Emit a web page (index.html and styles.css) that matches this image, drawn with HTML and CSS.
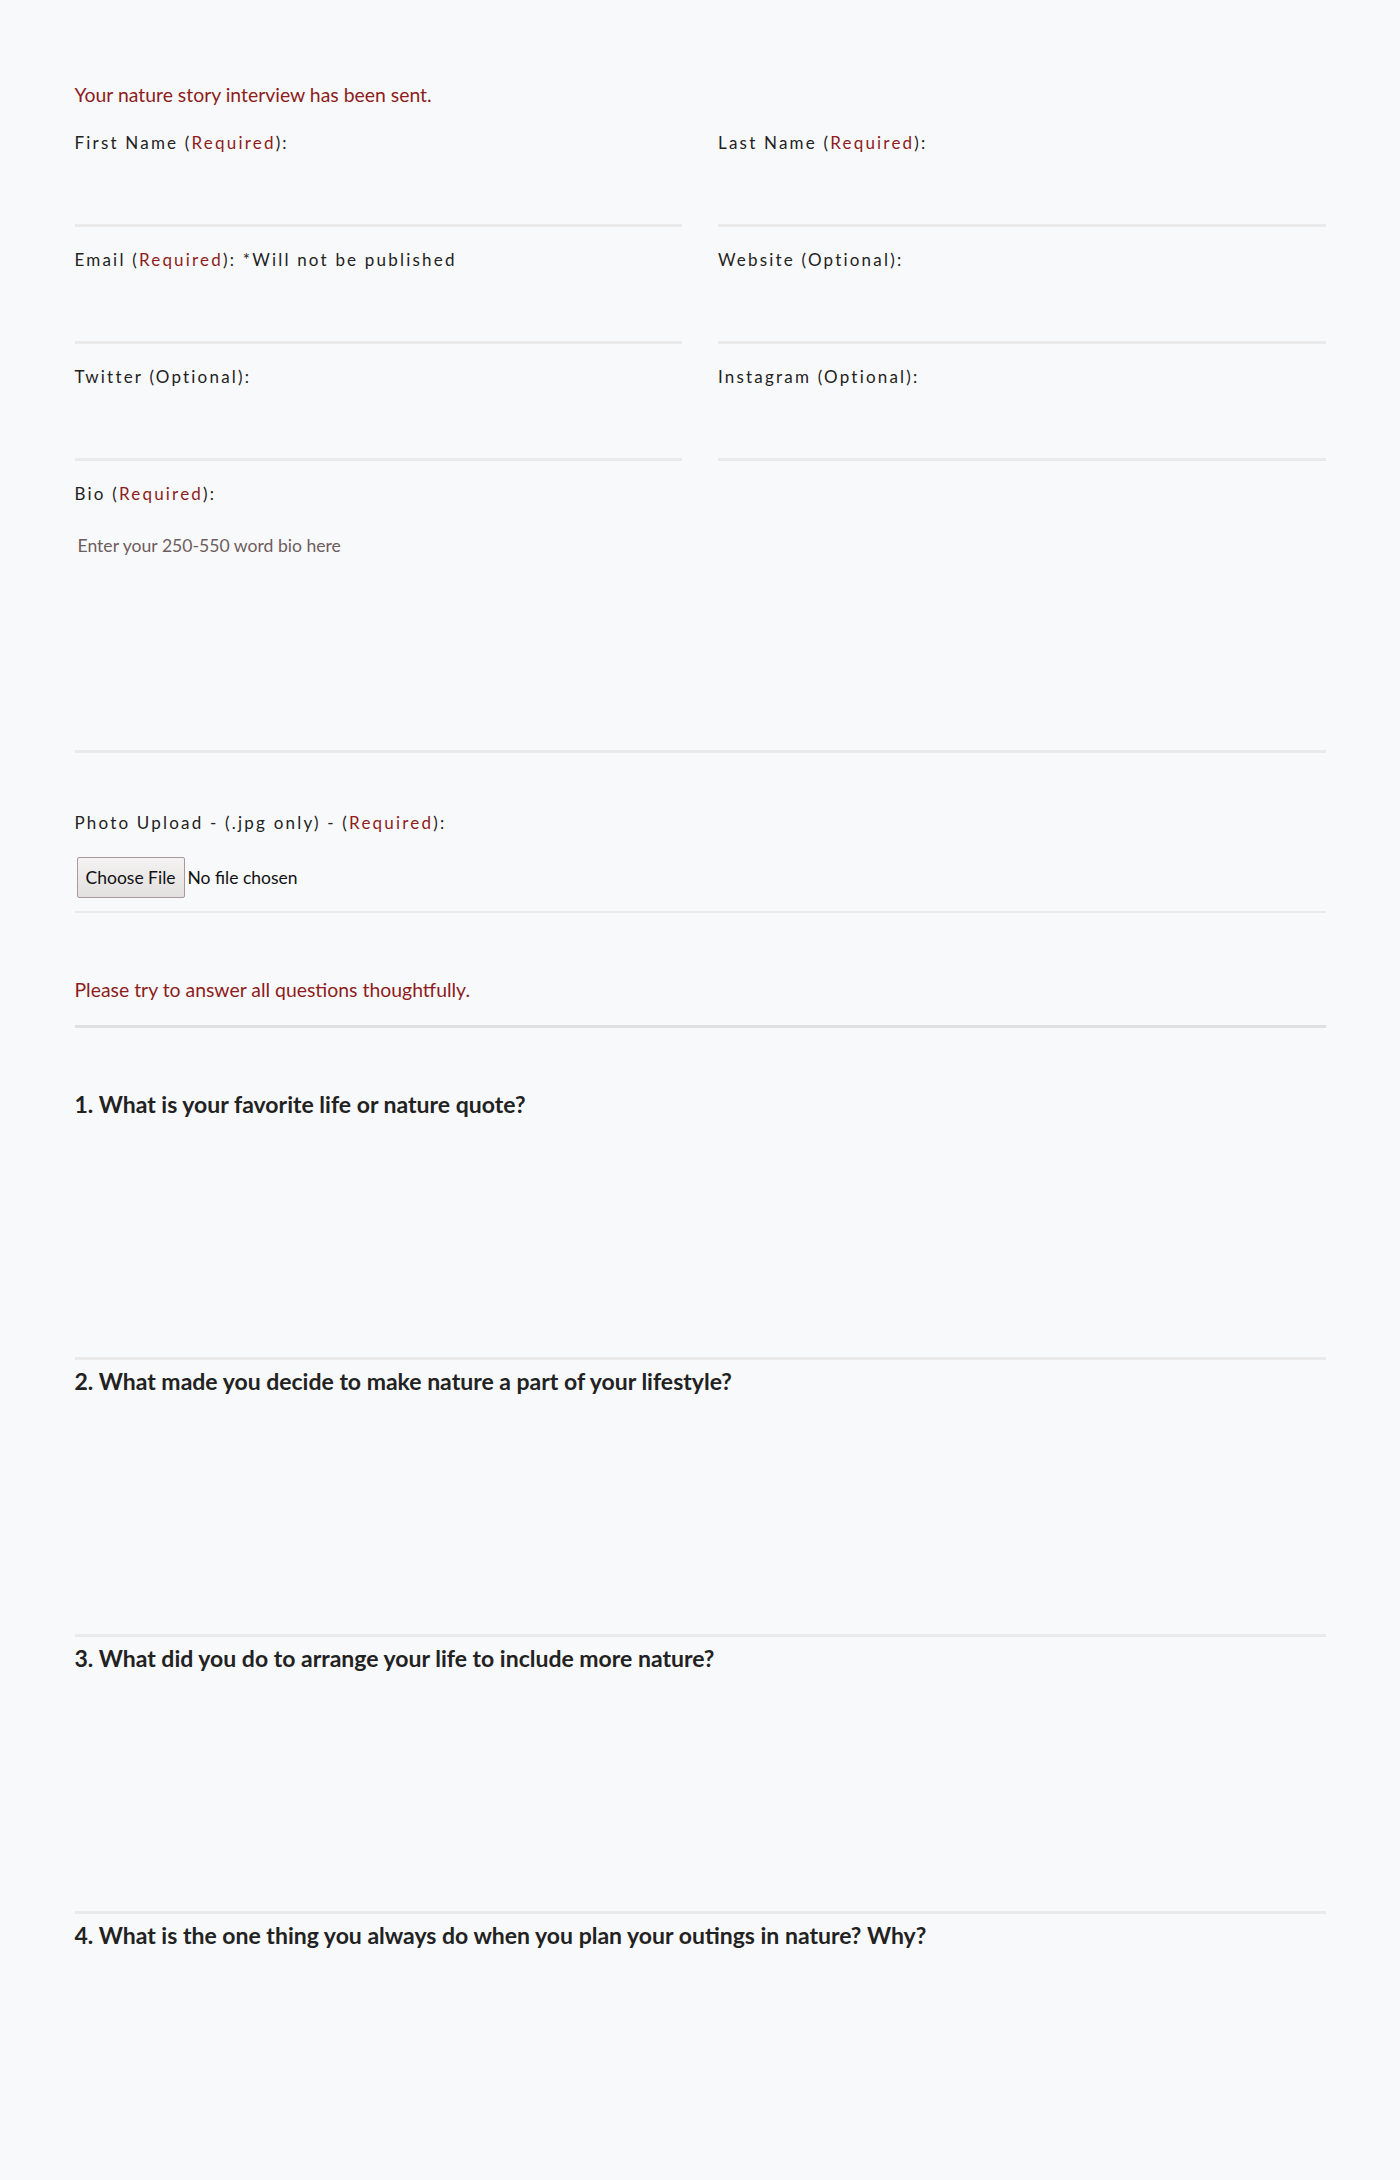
FILE: index.html
```html
<!DOCTYPE html>
<html lang="en">
<head>
<meta charset="utf-8">
<title>Nature Story Interview</title>
<link rel="stylesheet" href="styles.css">
</head>
<body>
<main class="page">
  <p class="notice notice-sent">Your nature story interview has been sent.</p>
  <form class="story-form">
    <div class="grid">
      <div class="field">
        <label class="label" for="fn">First Name (<span class="req">Required</span>):</label>
        <input class="text-input" id="fn" type="text">
      </div>
      <div class="field">
        <label class="label" for="ln">Last Name (<span class="req">Required</span>):</label>
        <input class="text-input" id="ln" type="text">
      </div>
      <div class="field">
        <label class="label" for="em">Email (<span class="req">Required</span>): *Will not be published</label>
        <input class="text-input" id="em" type="email">
      </div>
      <div class="field">
        <label class="label" for="ws">Website (Optional):</label>
        <input class="text-input" id="ws" type="text">
      </div>
      <div class="field">
        <label class="label" for="tw">Twitter (Optional):</label>
        <input class="text-input" id="tw" type="text">
      </div>
      <div class="field">
        <label class="label" for="ig">Instagram (Optional):</label>
        <input class="text-input" id="ig" type="text">
      </div>
    </div>
    <div class="field">
      <label class="label" for="bio">Bio (<span class="req">Required</span>):</label>
      <textarea class="bio" id="bio" placeholder="Enter your 250-550 word bio here"></textarea>
    </div>
    <div class="field photo">
      <label class="label" for="ph">Photo Upload - (.jpg only) - (<span class="req">Required</span>):</label>
      <div class="file-wrap"><input class="file" id="ph" type="file"></div>
    </div>
    <p class="notice notice-try">Please try to answer all questions thoughtfully.</p>
    <div class="questions">
      <div class="question">
        <label class="q-label" for="q1">1. What is your favorite life or nature quote?</label>
        <textarea class="answer" id="q1"></textarea>
      </div>
      <div class="question">
        <label class="q-label" for="q2">2. What made you decide to make nature a part of your lifestyle?</label>
        <textarea class="answer" id="q2"></textarea>
      </div>
      <div class="question">
        <label class="q-label" for="q3">3. What did you do to arrange your life to include more nature?</label>
        <textarea class="answer" id="q3"></textarea>
      </div>
      <div class="question">
        <label class="q-label" for="q4">4. What is the one thing you always do when you plan your outings in nature? Why?</label>
        <textarea class="answer" id="q4"></textarea>
      </div>
    </div>
  </form>
</main>
</body>
</html>
```

FILE: styles.css
```css
html, body {
  margin: 0;
  padding: 0;
  background: #f8f9fb;
}

body {
  font-family: Lato, "Noto Sans", "Liberation Sans", sans-serif;
  color: #222;
}

.page {
  width: 1251px;
  margin: 0 auto;
  padding: 83px 0 0;
}

.notice {
  margin: 0;
  color: #8e1c20;
  font-size: 19.4px;
  line-height: 24px;
}

.notice-sent {
  margin-bottom: 26px;
}

.grid {
  display: grid;
  grid-template-columns: 1fr 1fr;
  column-gap: 36px;
}

.field {
  display: flex;
  flex-direction: column;
  margin-bottom: 23px;
}

.label {
  display: block;
  font-size: 17px;
  line-height: 20px;
  letter-spacing: 2.2px;
  color: #222;
  margin-bottom: 10px;
}

.req {
  color: #8e1c20;
}

.text-input {
  box-sizing: border-box;
  height: 64px;
  border: 0;
  border-bottom: 3px solid #eaeaea;
  background: transparent;
  font: inherit;
  outline: none;
}

.bio {
  box-sizing: border-box;
  height: 239px;
  border: 0;
  border-bottom: 3px solid #eaeaea;
  background: transparent;
  padding: 22px 3px 0;
  font-family: inherit;
  font-size: 17.6px;
  line-height: 20px;
  resize: none;
  outline: none;
}

.bio::placeholder {
  color: #6e5d5d;
}

.photo {
  margin-top: 60px;
  margin-bottom: 0;
}

.photo .label {
  margin-bottom: 24px;
}

.file-wrap {
  padding: 0 0 13px 2px;
  border-bottom: 2px solid #eaeaea;
}

.file {
  font-family: inherit;
  font-size: 17.5px;
  color: #111;
}

.file::file-selector-button {
  height: 41px;
  padding: 0 8px;
  margin-right: 3px;
  font-family: inherit;
  font-size: 17.5px;
  color: #111;
  border: 1px solid #a89a9a;
  border-radius: 2px;
  background: linear-gradient(#f4f2f2, #e2dfdf);
}

.notice-try {
  margin-top: 65px;
  padding-bottom: 23px;
  border-bottom: 3px solid #e0e0e0;
}

.questions {
  padding-top: 64px;
}

.question {
  display: flex;
  flex-direction: column;
  margin-bottom: 9px;
}

.q-label {
  font-size: 23px;
  line-height: 24px;
  font-weight: 700;
  color: #222;
}

.answer {
  box-sizing: border-box;
  height: 244px;
  border: 0;
  border-bottom: 3px solid #eaeaea;
  background: transparent;
  resize: none;
  outline: none;
  font-family: inherit;
  font-size: 16px;
}
```
